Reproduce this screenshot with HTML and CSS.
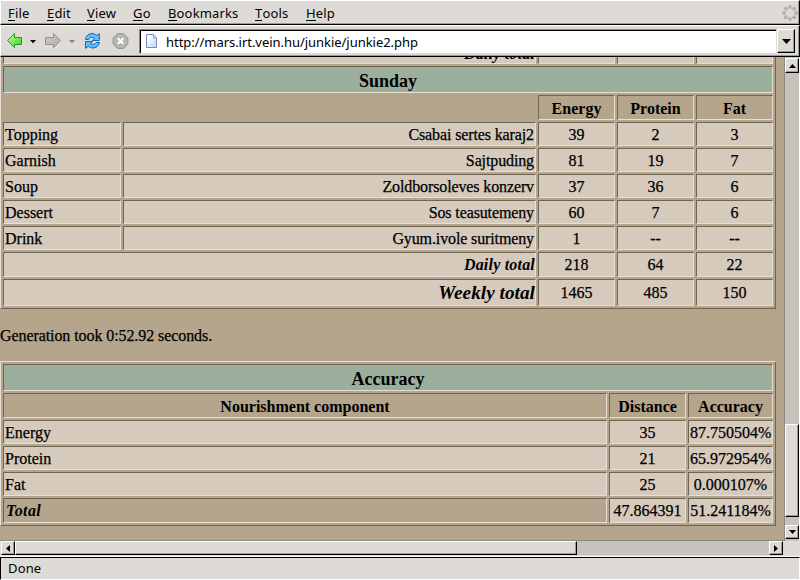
FILE: index.html
```html
<!DOCTYPE html>
<html lang="en">
<head>
<meta charset="utf-8">
<title>Menu generator</title>
<link rel="stylesheet" href="styles.css">
</head>
<body>
<div class="window">
  <nav class="menubar">
    <span><u>F</u>ile</span><span><u>E</u>dit</span><span><u>V</u>iew</span><span><u>G</u>o</span><span><u>B</u>ookmarks</span><span><u>T</u>ools</span><span><u>H</u>elp</span>
    <svg class="throbber" width="16" height="16" viewBox="0 0 16 16" fill="#b5b2ad">
      <circle cx="8" cy="2" r="2"/><circle cx="12.2" cy="3.8" r="2"/><circle cx="14" cy="8" r="2"/><circle cx="12.2" cy="12.2" r="2"/><circle cx="8" cy="14" r="2"/><circle cx="3.8" cy="12.2" r="2"/><circle cx="2" cy="8" r="2"/><circle cx="3.8" cy="3.8" r="2"/>
    </svg>
  </nav>
  <div class="toolbar">
    <svg class="icons" width="138" height="30" viewBox="1 0 138 30">
      <defs>
        <linearGradient id="green" x1="0" y1="0" x2="1" y2="1"><stop offset="0" stop-color="#d8ffb0"/><stop offset=".5" stop-color="#7be860"/><stop offset="1" stop-color="#35cf35"/></linearGradient>
        <linearGradient id="grey" x1="0" y1="0" x2="1" y2="1"><stop offset="0" stop-color="#cbcac7"/><stop offset="1" stop-color="#aeaeac"/></linearGradient>
      </defs>
      <path d="M7.600 14.600 14.500 7.600V11.500H21.500V18.500H14.500V21.600Z" fill="url(#green)" stroke="#219a21" stroke-linejoin="round"/>
      <path d="M30 14h6l-3 3.200z" fill="#000"/>
      <path d="M60.400 14.600 53.500 7.600V11.500H45.500V18.500H53.500V21.600Z" fill="url(#grey)" stroke="#8f8f8d" stroke-linejoin="round"/>
      <path d="M69 14h6l-3 3.200z" fill="#848280"/>
      <g stroke="#1262c8" stroke-width="1" stroke-linejoin="round" fill="#5cc2ff">
        <path d="M85.500 12.500C86.500 9.300 89 7.600 92 7.600C94 7.600 95.500 8.300 96.600 9.300L99.300 7.700V14.500H92.500L94.500 12.200C92.500 10.600 90 11 88.700 13.500H85.500Z"/>
        <path d="M99.500 16.500C98.500 20.200 96 22 93 22C91 22 89.500 21.300 88.400 20.300L85.500 22.300V15.500H92.500L90.500 17.600C92.500 19 95 18.600 96.300 16.500Z"/>
      </g>
      <path d="M117.400 7.600h6.200l4.300 4.300v6.200l-4.300 4.300h-6.200l-4.300-4.300v-6.200z" fill="#b6b5b3" stroke="#979693"/>
      <path d="M117.800 12.200l5.500 5.500m0-5.500l-5.500 5.500" stroke="#fff" stroke-width="2.200"/>
    </svg>
    <div class="address">
      <svg width="14" height="16" viewBox="0 0 14 16">
        <defs><linearGradient id="page" x1="0" y1="0" x2="1" y2="1"><stop offset=".2" stop-color="#fff"/><stop offset="1" stop-color="#b9d4f8"/></linearGradient></defs>
        <path d="M1.500 1.500h7l3 3.500v9.500h-10z" fill="url(#page)" stroke="#7d86c4"/>
        <path d="M8.500 1.500V5h3" fill="#d5e5fb" stroke="#7d9ed8"/>
      </svg>
      <span>http://mars.irt.vein.hu/junkie/junkie2.php</span>
    </div>
    <div class="button drop"><svg width="9" height="5" viewBox="0 0 9 5"><path d="M0 0h9L4.500 5z"/></svg></div>
  </div>
  <div class="view">
    <main class="page">
      <table class="week">
        <colgroup><col class="c118"><col class="c413"><col class="c77"><col class="c77"><col class="c77"></colgroup>
        <tr class="mid previous"><td colspan="2" class="daily">Daily total</td><td></td><td></td><td></td></tr>
        <tr class="title"><th colspan="5">Sunday</th></tr>
        <tr class="head"><td colspan="2" class="blank"></td><th>Energy</th><th>Protein</th><th>Fat</th></tr>
        <tr><td class="l">Topping</td><td class="r">Csabai sertes karaj2</td><td>39</td><td>2</td><td>3</td></tr>
        <tr><td class="l">Garnish</td><td class="r">Sajtpuding</td><td>81</td><td>19</td><td>7</td></tr>
        <tr><td class="l">Soup</td><td class="r">Zoldborsoleves konzerv</td><td>37</td><td>36</td><td>6</td></tr>
        <tr><td class="l">Dessert</td><td class="r">Sos teasutemeny</td><td>60</td><td>7</td><td>6</td></tr>
        <tr><td class="l">Drink</td><td class="r">Gyum.ivole suritmeny</td><td>1</td><td>--</td><td>--</td></tr>
        <tr class="mid"><td colspan="2" class="daily">Daily total</td><td>218</td><td>64</td><td>22</td></tr>
        <tr class="big"><td colspan="2" class="weekly">Weekly total</td><td>1465</td><td>485</td><td>150</td></tr>
      </table>
      <p>Generation took 0:52.92 seconds.</p>
      <table class="accuracy">
        <colgroup><col class="c604"><col class="c77"><col class="c85"></colgroup>
        <tr class="title wide"><th colspan="3">Accuracy</th></tr>
        <tr class="head"><th>Nourishment component</th><th>Distance</th><th>Accuracy</th></tr>
        <tr><td class="l">Energy</td><td>35</td><td>87.750504%</td></tr>
        <tr><td class="l">Protein</td><td>21</td><td>65.972954%</td></tr>
        <tr><td class="l">Fat</td><td>25</td><td>0.000107%</td></tr>
        <tr class="mid"><td class="l total">Total</td><td>47.864391</td><td>51.241184%</td></tr>
      </table>
    </main>
    <div class="vbar">
      <div class="button"><svg width="7" height="4" viewBox="0 0 7 4"><path d="M0 4h7L3.500 0z"/></svg></div>
      <div class="thumb"></div>
      <div class="button"><svg width="7" height="4" viewBox="0 0 7 4"><path d="M0 0h7L3.500 4z"/></svg></div>
    </div>
  </div>
  <div class="hrow">
    <div class="hbar">
      <div class="button"><svg width="4" height="7" viewBox="0 0 4 7"><path d="M4 0v7L0 3.500z"/></svg></div>
      <div class="thumb"></div>
      <div class="button"><svg width="4" height="7" viewBox="0 0 4 7"><path d="M0 0v7L4 3.500z"/></svg></div>
    </div>
  </div>
  <footer class="status">Done</footer>
</div>
</body>
</html>
```
FILE: styles.css
```css
* { box-sizing: border-box; }
body { margin: 0; background: #dedbd6; color: #000; }
svg { display: block; }
.window {
  width: 800px; height: 580px; overflow: hidden;
  display: flex; flex-direction: column;
  font: 13px/16px "Noto Sans", sans-serif; letter-spacing: .15px;
}
.menubar {
  height: 25px; padding: 4px 1px 0 7px;
  display: grid; grid-template-columns: 39px 40px 46px 35px 87px 51px 1fr 16px;
  border: 1px solid; border-color: #fff #000 #000 #fff;
  box-shadow: inset -1px -1px #9c9a94;
}
.menubar u { text-decoration: none; border-bottom: 1px solid #000; display: inline-block; height: 16px; line-height: 16px; }
.toolbar {
  height: 32px; display: flex;
  border: 1px solid; border-color: #fff #000 #000 #fff;
  box-shadow: inset -1px -1px #9c9a94;
}
.address {
  width: 638px; height: 25px; margin-top: 3px; padding-left: 5px;
  display: flex; align-items: center; gap: 7px;
  background: #fff; border: 1px solid; border-color: #8c8a84 #dedbd6 #dedbd6 #8c8a84;
  box-shadow: inset 1px 1px #000;
}
.address svg { margin-top: -1px; }
.address span { letter-spacing: -.04px; }
.button {
  display: flex; align-items: center; justify-content: center;
  background: #dedbd6; border: 1px solid; border-color: #fff #000 #000 #fff;
  box-shadow: inset -1px -1px #9c9a94;
}
.drop { width: 18px; height: 24px; margin-top: 3px; }
.view { height: 484px; display: flex; }
.page {
  width: 785px; overflow: hidden; background: #b5a58c;
  border-right: 1px solid #8c8a84; border-bottom: 1px solid #8c8a84;
  font: 16px/18px "Liberation Serif", serif; letter-spacing: 0;
  -webkit-text-stroke: .25px #000;
}
table {
  width: 776px; table-layout: fixed;
  border-collapse: separate; border-spacing: 2px;
  border: 1px solid; border-color: #e7dfd6 #6b6552 #6b6552 #e7dfd6;
}
.week { margin-top: -21px; }
.c118 { width: 118px; } .c413 { width: 413px; } .c77 { width: 77px; }
.c604 { width: 604px; } .c85 { width: 85px; }
tr { height: 24px; }
.mid, .head { height: 25px; }
.title, .big { height: 27px; }
td, th {
  padding: 2px 1px 0; text-align: center; vertical-align: middle; white-space: nowrap;
  background: #d6cabd; border: 1px solid; border-color: #6b6552 #e7dfd6 #e7dfd6 #6b6552;
}
th { background: #b5a58c; -webkit-text-stroke: 0; letter-spacing: 0; }
.title th { background: #9cae9c; font-size: 18px; }
.blank { background: none; border: 0; }
.mid td, .big td { padding-top: 0; }
.previous .daily { padding-top: 4px; }
.l { text-align: left; }
.r { text-align: right; letter-spacing: -.12px; }
.daily, .weekly, .total { font-weight: bold; font-style: italic; -webkit-text-stroke: 0; }
.daily, .weekly { text-align: right; padding-right: 0; }
.daily { letter-spacing: .2px; }
.weekly { font-size: 19.2px; letter-spacing: .05px; }
.total { background: #b5a58c; letter-spacing: .4px; padding-left: 2px; }
p { margin: 18px 0 16px; letter-spacing: -.08px; }
.vbar { width: 15px; display: flex; flex-direction: column; background: #c6c3bd; border-right: 1px solid #fff; }
.vbar .button { height: 15px; }
.vbar .button:last-child { height: 14px; }
.thumb { background: #dedbd6; border: 1px solid; border-color: #fff #000 #000 #fff; box-shadow: inset -1px -1px #9c9a94; }
.vbar .thumb { margin: 351px 0 8px; height: 93px; }
.vbar .button:first-child { margin-top: 1px; }
.hrow { height: 16px; border-bottom: 1px solid #fff; padding-left: 1px; }
.hbar { width: 782px; height: 14px; display: flex; background: #c6c3bd; }
.hbar .button { width: 14px; }
.hbar .thumb { width: 562px; margin-right: 192px; }
.status { height: 23px; padding: 2px 7px; border: 1px solid; border-color: #000 #fff #fff #000; }
```
